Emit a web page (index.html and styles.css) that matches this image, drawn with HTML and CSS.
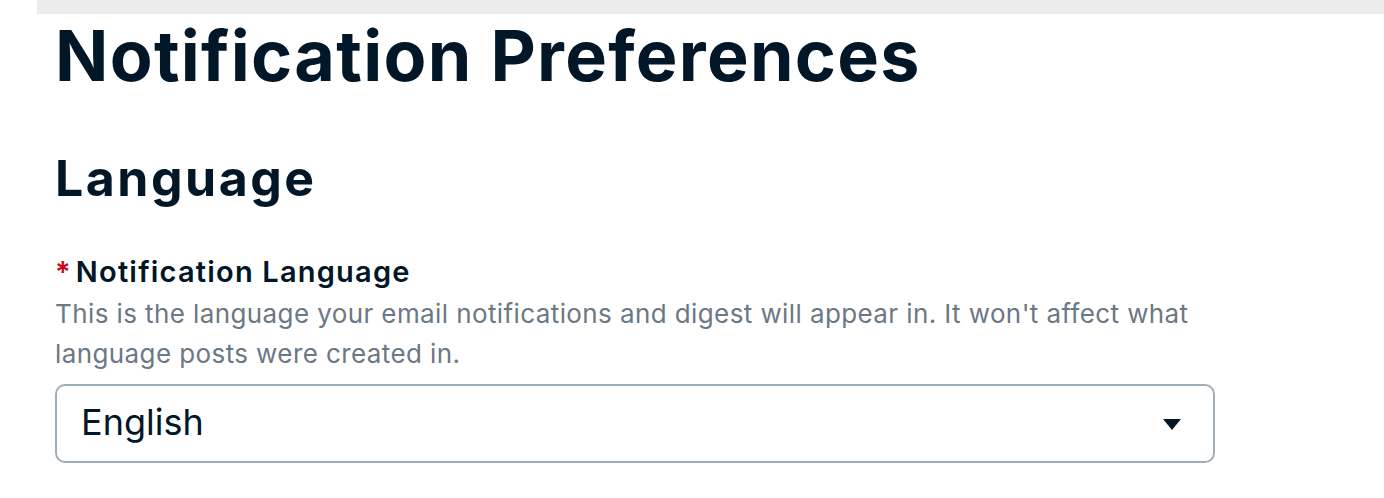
FILE: index.html
```html
<!DOCTYPE html>
<html lang="en">

<head>
    <meta charset="UTF-8" />
    <meta name="viewport" content="width=device-width, initial-scale=1.0" />
    <title>Notification Preferences</title>
    <link rel="stylesheet" href="styles.css">
</head>

<body>
    <div class="topbar"></div>

    <main class="page">
        <h1>Notification Preferences</h1>

        <section class="section">
            <h2>Language</h2>

            <div class="field">
                <label for="lang"><span class="required">*</span>Notification Language</label>
                <p class="help">This is the language your email notifications and digest will appear in. It won't affect what language posts were created in.</p>
                <div class="select">
                    <span class="value">English</span>
                    <svg class="caret" width="18" height="11" viewBox="0 0 18 11">
                        <path d="M0 0 H18 L9 11 Z" fill="#011627" />
                    </svg>
                </div>
            </div>
        </section>
    </main>
</body>

</html>
```

FILE: styles.css
```css
/* Base */
* {
    box-sizing: border-box;
    margin: 0;
    padding: 0;
}

body {
    font-family: 'Inter', sans-serif;
    background-color: #fff;
    color: #011627;
}

/* Top strip */
.topbar {
    height: 14px;
    margin-left: 37px;
    background-color: #ececec;
}

/* Content */
.page {
    padding-left: 55px;
    width: 1215px;
}

h1 {
    font-size: 70px;
    font-weight: 700;
    line-height: 84px;
    letter-spacing: 1.3px;
}

.section h2 {
    font-size: 50px;
    font-weight: 700;
    line-height: 64px;
    margin-top: 48px;
    letter-spacing: 2.5px;
}

.field {
    margin-top: 44px;
}

.field label {
    display: block;
    font-size: 29px;
    font-weight: 600;
    line-height: 36px;
    letter-spacing: 1.2px;
    margin-bottom: 4px;
}

.required {
    color: #d0021b;
    margin-right: 4px;
}

.help {
    font-size: 26px;
    line-height: 40px;
    letter-spacing: 0.4px;
    color: #6b7885;
}

.select {
    margin-top: 10px;
    height: 79px;
    border: 2px solid #a0adb9;
    border-radius: 10px;
    display: flex;
    align-items: center;
    justify-content: space-between;
    padding: 2px 32px 0 24px;
}

.select .value {
    font-size: 36px;
    margin-top: -6px;
}
```
